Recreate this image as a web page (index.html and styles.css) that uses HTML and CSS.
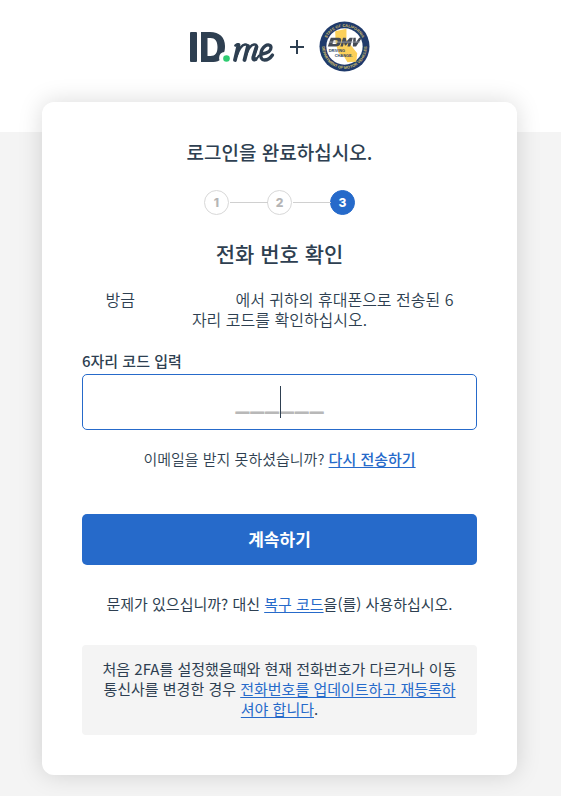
FILE: index.html
```html
<!DOCTYPE html>
<html lang="ko">
<head>
<meta charset="utf-8">
<meta name="viewport" content="width=device-width, initial-scale=1">
<title>전화 번호 확인</title>
<link rel="stylesheet" href="styles.css">
</head>
<body>
<header class="header">
  <svg class="logo" viewBox="0 0 86 36" role="img" aria-label="ID.me">
    <rect x="1" y="2" width="7" height="30" rx="1" fill="#2e3f51"/>
    <path fill="#2e3f51" fill-rule="evenodd" d="M12 2H21c9.500 0 15 5.500 15 14 0 2.500-.2 4.300-.8 6-2.800.3-4.700 2-5 5-.2 1.300-.1 2.300.3 3.200-2.300 1.500-5 1.800-8.500 1.800H12zM18.500 8v18H21.500c4.800 0 7-3 7-9S26 8 21.500 8z"/>
    <circle cx="37.500" cy="28.500" r="3.300" fill="#2ecc71"/>
    <g fill="none" stroke="#2e3f51" stroke-linecap="round" stroke-linejoin="round">
      <path stroke-width="3.800" d="M49.500 15 46 30M59 16 55.500 30M67.500 17 64.500 26.500q-1 4 2 2.800"/>
      <path stroke-width="2.600" d="M46.500 15.500q2-1.500 3-1M47.500 26q4-11 8.500-11.500 3-.2 2.900 3.500M56.500 26q4-11 8.500-11.500 3.500-.3 2.500 3.500l-1 3.500"/>
      <path stroke-width="3.300" d="M73 24c6-1 9-3.500 9-6.500 0-2.800-3.300-3.300-6-1.400-4.500 3.200-6.500 13.900-.5 13.900 3.500 0 6-2 8-5"/>
      <path stroke-width="2" d="M66 29.500q2.500-1 4-4"/>
    </g>
  </svg>
  <svg class="plus" viewBox="0 0 16 16" aria-hidden="true"><path d="M8 1v14M1 8h14" stroke="#2e3f51" stroke-width="2"/></svg>
  <svg class="seal" viewBox="0 0 52 52" role="img" aria-label="State of California DMV">
    <defs>
      <path id="arc-top" d="M6 26a20 20 0 0 1 40 0"/>
      <path id="arc-bottom" d="M3.200 26a22.800 22.800 0 0 0 45.600 0"/>
    </defs>
    <circle cx="26" cy="26" r="25.500" fill="#1f3a6b"/>
    <circle cx="26" cy="26" r="18.500" fill="#fff"/>
    <path fill="#fbd05a" d="M16.500 10.500 28 8v11l11 14-1 8.500-9 .5-3-5-6-4-3-10z"/>
    <text class="seal-ring"><textPath href="#arc-top" startOffset="50%">STATE OF CALIFORNIA</textPath></text>
    <text class="seal-ring"><textPath href="#arc-bottom" startOffset="50%">DEPARTMENT OF MOTOR VEHICLES</textPath></text>
    <path fill="#454b56" fill-rule="evenodd" d="M12 17h8q3.500 0 2.500 4l-.7 2.300q-1 2.700-4.500 2.700H9zM15 19.500l-1.300 4H17q1.500 0 2-2t-1-2zM24.500 17h2.800l.7 4 3.500-4h3l-2.700 9h-2.800l1-4-2.600 3h-1l-1-3-1 4h-2.700zM35 17h2.500v5l3.500-5h2.800l-6 9H34.500z"/>
    <path stroke="#a3a9b3" stroke-width=".8" d="M10 21.500h32"/>
    <text class="seal-word" x="10" y="32">DRIVING</text>
    <text class="seal-word" x="16" y="37">CHANGE.</text>
  </svg>
</header>
<main class="main">
  <section class="card">
    <h1 class="title">로그인을 완료하십시오.</h1>
    <ol class="steps">
      <li class="step">1</li>
      <li class="step">2</li>
      <li class="step step-current" aria-current="step">3</li>
    </ol>
    <h2 class="subtitle">전화 번호 확인</h2>
    <p class="intro">방금 <span class="phone"></span>에서 귀하의 휴대폰으로 전송된 6자리 코드를 확인하십시오.</p>
    <form class="form">
      <label class="label" for="code">6자리 코드 입력</label>
      <div class="field">
        <input class="input" id="code" type="text" inputmode="numeric" maxlength="6" placeholder="______">
        <span class="caret"></span>
      </div>
      <p class="resend">이메일을 받지 못하셨습니까? <a class="link link-strong" href="#">다시 전송하기</a></p>
      <button class="button" type="submit">계속하기</button>
    </form>
    <p class="help">문제가 있으십니까? 대신 <a class="link" href="#">복구 코드</a>을(를) 사용하십시오.</p>
    <p class="notice">처음 2FA를 설정했을때와 현재 전화번호가 다르거나 이동통신사를 변경한 경우 <a class="link" href="#">전화번호를 업데이트하고 재등록하셔야 합니다</a>.</p>
  </section>
</main>
</body>
</html>
```
FILE: styles.css
```css
* { box-sizing: border-box; }

body {
  margin: 0;
  min-height: 100vh;
  background: #f4f4f4;
  color: #2e3f51;
  font-family: "Noto Sans CJK KR", sans-serif;
  font-size: 15px;
  font-weight: 400;
  line-height: 20px;
}

h1, h2, p, ol { margin: 0; padding: 0; }

.header {
  display: flex;
  justify-content: center;
  align-items: flex-start;
  gap: 14px;
  height: 132px;
  padding: 21px 3px 0 0;
  background: #fff;
}

.logo { width: 86px; height: 36px; margin-top: 9px; }
.plus { width: 16px; height: 16px; margin-top: 18px; }
.seal { width: 51px; height: 51px; }

.seal-ring {
  fill: #d9c16b;
  font: bold 4px "Liberation Sans", sans-serif;
  text-anchor: middle;
}

.seal-word {
  fill: #2b3e63;
  font: bold 4px "Liberation Sans", sans-serif;
}

.main { padding: 0 44px 21px 42px; }

.card {
  position: relative;
  max-width: 475px;
  margin: -30px auto 0;
  padding: 40px;
  border-radius: 12px;
  background: #fff;
  box-shadow: 0 0 25px rgba(0, 0, 0, 0.15);
  text-align: center;
}

.title { font-size: 19px; line-height: 20px; font-weight: 500; }

.steps {
  display: flex;
  justify-content: center;
  align-items: center;
  margin-top: 28px;
  list-style: none;
}

.step {
  position: relative;
  display: grid;
  place-items: center;
  width: 25px;
  height: 25px;
  border: 1px solid #d8d8d8;
  border-radius: 50%;
  color: #b5b5b5;
  font: 800 12px Inter, sans-serif;
}

.step + .step { margin-left: 38px; }

.step + .step::before {
  content: "";
  position: absolute;
  right: 100%;
  top: 11px;
  width: 38px;
  border-top: 1px solid #d0d0d0;
}

.step-current { border-color: #266aca; background: #266aca; color: #fff; }

.subtitle { margin-top: 23px; font-size: 21px; line-height: 30px; font-weight: 500; }

.intro {
  margin: 21px 20px 0;
  font-size: 16px;
  font-weight: 350;
}

.phone { display: inline-block; width: 96px; }

.form { margin-top: 22px; }

.label { display: block; text-align: left; font-weight: 500; }

.field { position: relative; margin-top: 3px; }

.input {
  display: block;
  width: 100%;
  height: 56px;
  padding: 0 16px 8px;
  border: 1px solid #266aca;
  border-radius: 5px;
  background: #fff;
  color: #2e3f51;
  font: 900 26px "Noto Sans CJK KR", sans-serif;
  text-align: center;
  outline: none;
}

.input::placeholder { color: #b8b8b8; opacity: 1; }

.caret {
  position: absolute;
  top: 12px;
  left: 50%;
  width: 1px;
  height: 32px;
  background: #2e3f51;
}

.resend { margin-top: 19px; font-weight: 350; }

.link { color: #266aca; text-decoration: underline; text-underline-offset: 2px; }
.link-strong { font-weight: 500; }

.button {
  display: block;
  width: 100%;
  height: 51px;
  margin-top: 45px;
  padding: 0 0 2px;
  border: 0;
  border-radius: 5px;
  background: #266aca;
  color: #fff;
  font: bold 17px "Noto Sans CJK KR", sans-serif;
}

.help { margin-top: 29px; }

.notice {
  margin-top: 31px;
  padding: 14px 18px 16px;
  border-radius: 4px;
  background: #f4f4f4;
}
```
